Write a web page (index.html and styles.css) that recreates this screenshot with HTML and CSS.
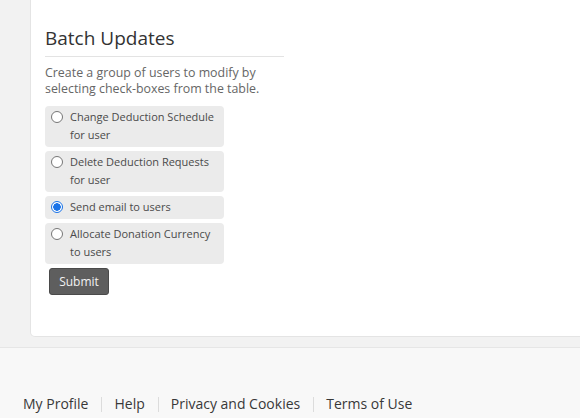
FILE: index.html
```html
<!DOCTYPE html>
<html>
<head>
<meta charset="utf-8">
<link rel="stylesheet" href="styles.css">
</head>
<body>
<div class="page">
  <div class="card">
    <h2 class="title">Batch Updates</h2>
    <p class="desc">Create a group of users to modify by selecting check-boxes from the table.</p>
    <form class="options">
      <label class="option"><span class="radio"></span><span class="label">Change Deduction Schedule for user</span></label>
      <label class="option"><span class="radio"></span><span class="label">Delete Deduction Requests for user</span></label>
      <label class="option"><span class="radio checked"></span><span class="label">Send email to users</span></label>
      <label class="option"><span class="radio"></span><span class="label">Allocate Donation Currency to users</span></label>
      <button type="button" class="submit">Submit</button>
    </form>
  </div>
</div>
<footer class="footer">
  <a class="flink">My Profile</a><span class="sep"></span>
  <a class="flink">Help</a><span class="sep"></span>
  <a class="flink">Privacy and Cookies</a><span class="sep"></span>
  <a class="flink">Terms of Use</a>
</footer>
</body>
</html>
```
FILE: styles.css
```css
html, body {
  margin: 0;
  padding: 0;
}
body {
  width: 580px;
  height: 418px;
  overflow: hidden;
  background: #f2f2f2;
  font-family: "Open Sans", "Liberation Sans", sans-serif;
  color: #333;
}
.page {
  padding-left: 30px;
  padding-bottom: 10px;
}
.card {
  background: #fff;
  border: 1px solid #e4e4e4;
  border-top: none;
  border-radius: 0 0 0 5px;
  margin-right: -20px;
  height: 337px;
  box-sizing: border-box;
  padding: 25px 0 0 14px;
}
.title {
  margin: 0;
  width: 239px;
  font-size: 19px;
  font-weight: 400;
  line-height: 26px;
  color: #333;
  padding-bottom: 5px;
  border-bottom: 1px solid #e3e3e3;
}
.desc {
  margin: 8px 0 9px 0;
  width: 250px;
  font-size: 12.4px;
  line-height: 16px;
  color: #666;
}
.options {
  display: flex;
  flex-direction: column;
  align-items: flex-start;
  gap: 4px;
}
.option {
  display: flex;
  align-items: flex-start;
  width: 179px;
  box-sizing: border-box;
  background: #ebebeb;
  border-radius: 4px;
  padding: 2px 8px 3px 6px;
}
.radio {
  flex: none;
  width: 12px;
  height: 12px;
  box-sizing: border-box;
  border: 1px solid #767676;
  border-radius: 50%;
  background: #fff;
  margin: 3px 7px 0 0;
}
.radio.checked {
  border: 1px solid #1a73e8;
  background: radial-gradient(circle, #1a73e8 0 3.5px, #fff 4px);
}
.label {
  font-size: 11px;
  line-height: 18px;
  color: #4a4a4a;
}
.submit {
  margin: 0 0 0 4px;
  width: 60px;
  height: 27px;
  border: 1px solid #4a4a4a;
  border-radius: 3px;
  background: #5e5e5e;
  color: #f2f2f2;
  font-family: "Open Sans", "Liberation Sans", sans-serif;
  font-size: 12px;
  padding: 0;
}
.footer {
  border-top: 1px solid #e6e6e6;
  background: #f8f8f8;
  height: 72px;
  box-sizing: border-box;
  padding: 41px 0 0 23px;
  display: flex;
  align-items: center;
}
.flink {
  font-size: 14px;
  line-height: 18px;
  color: #383838;
}
.sep {
  width: 1px;
  height: 15px;
  background: #dcdcdc;
  margin: 0 12px 0 13px;
}
```
